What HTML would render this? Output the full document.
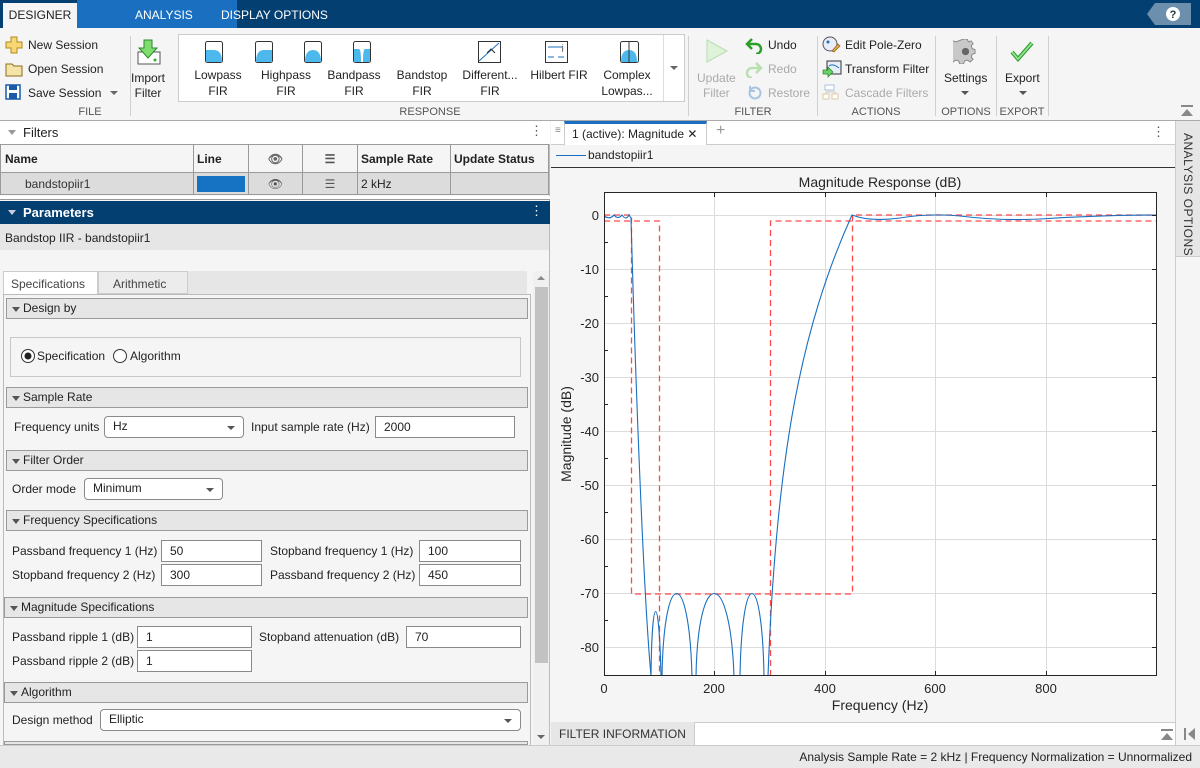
<!DOCTYPE html>
<html><head><meta charset="utf-8"><style>
*{box-sizing:border-box;margin:0;padding:0}
body{width:1200px;height:768px;position:relative;overflow:hidden;font-family:"Liberation Sans",Arial,sans-serif;font-size:12px;color:#222;background:#f5f5f5}
.a{position:absolute}
.t{position:absolute;white-space:nowrap}
.sec{position:absolute;left:6px;width:522px;height:21px;background:#e6e6e6;border:1px solid #9a9a9a;padding-left:16px;line-height:19px;font-size:12px}
.sec:before{content:"";position:absolute;left:5px;top:8px;border-left:4px solid transparent;border-right:4px solid transparent;border-top:5px solid #555}
.inp{position:absolute;height:22px;background:#fff;border:1px solid #8a8a8a;padding-left:8px;line-height:20px}
.dd{position:absolute;height:22px;background:#fff;border:1px solid #8a8a8a;border-radius:4px;padding-left:8px;line-height:19px}
.dd:after{content:"";position:absolute;right:8px;top:9px;border-left:4px solid transparent;border-right:4px solid transparent;border-top:4px solid #555}
.lbl{position:absolute;white-space:nowrap;line-height:22px}
.rb{position:absolute;font-size:12px;white-space:nowrap}
.gl{position:absolute;top:67px;text-align:center;width:70px;line-height:16px;font-size:12px}
.grp{position:absolute;top:106px;font-size:11px;color:#555;text-align:center}
.vs{position:absolute;top:36px;height:80px;width:1px;background:#d0d0d0}
th,td{border:1px solid #9a9a9a}
</style></head><body>
<div class="a" style="left:0;top:0;width:1200px;height:28px;background:#043f72"></div>
<div class="a" style="left:77px;top:0;width:160px;height:28px;background:#1a6fc0"></div>
<div class="a" style="left:3px;top:3px;width:74px;height:25px;background:#f5f5f5"></div>
<div class="t" style="left:3px;width:74px;top:8px;text-align:center;font-size:12px;color:#222">DESIGNER</div>
<div class="t" style="left:135px;top:8px;font-size:12px;color:#fff">ANALYSIS</div>
<div class="t" style="left:221px;top:8px;font-size:12px;color:#fff">DISPLAY OPTIONS</div>
<svg class="a" style="left:1147px;top:3px" width="44" height="22"><path d="M8 0H44V22H8L0 11Z" fill="#6d8fae"/><circle cx="26" cy="11" r="7" fill="#fff"/><text x="26" y="15" font-size="11" font-weight="bold" text-anchor="middle" fill="#234" font-family="Liberation Sans">?</text></svg>
<div class="a" style="left:0;top:28px;width:1200px;height:93px;background:#f5f5f5;border-bottom:1px solid #aaa"></div>
<svg class="a" style="left:5px;top:36px" width="18" height="18"><path d="M6 1h6v5h5v6h-5v5H6v-5H1V6h5z" fill="#f7d774" stroke="#b08a1c"/></svg>
<div class="t" style="left:28px;top:38px">New Session</div>
<svg class="a" style="left:5px;top:61px" width="18" height="16"><path d="M1 3h6l2 2h8v10H1z" fill="#f5e4a8" stroke="#8a6d1c"/></svg>
<div class="t" style="left:28px;top:62px">Open Session</div>
<svg class="a" style="left:5px;top:84px" width="16" height="16"><rect x="1" y="1" width="14" height="14" fill="#fff" stroke="#1a5aa8" stroke-width="1.5"/><rect x="4" y="1" width="8" height="5" fill="#1a5aa8"/><rect x="4" y="9" width="8" height="6" fill="#1a5aa8"/></svg>
<div class="t" style="left:28px;top:86px">Save Session</div>
<div class="a" style="left:110px;top:91px;border-left:4px solid transparent;border-right:4px solid transparent;border-top:4px solid #666"></div>
<svg class="a" style="left:135px;top:38px" width="28" height="28"><rect x="3" y="14" width="22" height="12" fill="#fff" stroke="#555"/><circle cx="20" cy="22" r="1.5" fill="#3a3"/><path d="M9 2h8v8h5l-9 10-9-10h5z" fill="#7fdc6e" stroke="#2a8a2a"/></svg>
<div class="t" style="left:131px;top:71px;text-align:center;line-height:15px">Import<br>Filter</div>
<div class="grp" style="left:70px;width:40px">FILE</div>
<div class="vs" style="left:130px"></div>
<div class="a" style="left:178px;top:34px;width:507px;height:68px;background:#fff;border:1px solid #ccc"></div>
<div class="a" style="left:663px;top:35px;width:21px;height:66px;border-left:1px solid #ddd"></div>
<div class="a" style="left:670px;top:66px;border-left:4px solid transparent;border-right:4px solid transparent;border-top:4px solid #666"></div>
<svg class="a" style="left:205px;top:41px" width="220" height="22">
<g stroke="#333" stroke-width="1" fill="#fff"><rect x="0.5" y="0.5" width="17" height="21" rx="2"/><rect x="50.5" y="0.5" width="17" height="21" rx="2"/><rect x="99.5" y="0.5" width="17" height="21" rx="2"/><rect x="148.5" y="0.5" width="17" height="21" rx="2"/></g>
<path d="M1 9h8q8 0 8 12H1z" fill="#4db8ec"/><path d="M51 21q0-12 8-12h8v12z" fill="#4db8ec"/><path d="M100 21q0-12 8-12q8 0 8 12z" fill="#4db8ec"/><path d="M149 8h5q2 0 2 13h2q0-13 2-13h5v13h-16z" fill="#4db8ec"/>
</svg>
<svg class="a" style="left:478px;top:41px" width="180" height="22"><rect x="0.5" y="0.5" width="22" height="21" fill="#fff" stroke="#333"/><path d="M1 20L21 2" stroke="#1a6fc0"/><path d="M9 12l4-4 4 4" stroke="#333" fill="none"/><rect x="67.5" y="0.5" width="22" height="21" fill="#fff" stroke="#333"/><path d="M70 6h14M70 16h6M80 16h6" stroke="#1a6fc0"/><text x="84" y="9" font-size="7">j</text><rect x="142.5" y="0.5" width="18" height="21" rx="2" fill="#fff" stroke="#333"/><path d="M143 21q0-12 8-12q8 0 8 12z" fill="#4db8ec"/><path d="M151 1v20" stroke="#333"/></svg>
<div class="gl" style="left:183px">Lowpass<br>FIR</div>
<div class="gl" style="left:251px">Highpass<br>FIR</div>
<div class="gl" style="left:319px">Bandpass<br>FIR</div>
<div class="gl" style="left:387px">Bandstop<br>FIR</div>
<div class="gl" style="left:455px">Different...<br>FIR</div>
<div class="gl" style="left:524px">Hilbert FIR</div>
<div class="gl" style="left:592px">Complex<br>Lowpas...</div>
<div class="grp" style="left:390px;width:80px">RESPONSE</div>
<div class="vs" style="left:688px"></div>
<svg class="a" style="left:705px;top:38px" width="24" height="26"><path d="M2 2L22 13L2 24Z" fill="#dff3da" stroke="#b6dfae"/></svg>
<div class="t" style="left:697px;top:71px;text-align:center;line-height:15px;color:#aaa">Update<br>Filter</div>
<svg class="a" style="left:745px;top:36px" width="18" height="18"><path d="M7 3L2 8l5 5M2 8h9a5 5 0 0 1 0 10" fill="none" stroke="#2aa02a" stroke-width="2.5"/></svg>
<div class="t" style="left:768px;top:38px">Undo</div>
<svg class="a" style="left:745px;top:60px" width="18" height="18"><path d="M11 3l5 5-5 5M16 8H7a5 5 0 0 0 0 10" fill="none" stroke="#b8e0b0" stroke-width="2.5"/></svg>
<div class="t" style="left:768px;top:62px;color:#aaa">Redo</div>
<svg class="a" style="left:747px;top:84px" width="16" height="16"><circle cx="8" cy="9" r="5.5" fill="none" stroke="#a8c4e4" stroke-width="2"/><path d="M3 2v5h5" fill="none" stroke="#a8c4e4" stroke-width="2"/></svg>
<div class="t" style="left:768px;top:86px;color:#aaa">Restore</div>
<div class="grp" style="left:730px;width:46px">FILTER</div>
<div class="vs" style="left:817px"></div>
<svg class="a" style="left:822px;top:36px" width="20" height="18"><circle cx="8" cy="8" r="7" fill="#e8eef8" stroke="#555"/><circle cx="6" cy="6" r="1.5" fill="#1a6fc0"/><path d="M10 15l6-7 2 2-6 6z" fill="#e8a84a" stroke="#8a5a1a" stroke-width=".7"/></svg>
<div class="t" style="left:845px;top:38px">Edit Pole-Zero</div>
<svg class="a" style="left:822px;top:60px" width="20" height="18"><rect x="5" y="1" width="14" height="13" fill="#e8eef8" stroke="#333"/><path d="M7 6q4-3 10 2" stroke="#1a6fc0" fill="none"/><path d="M1 10h5v-3l5 5-5 5v-3H1z" fill="#6ad06a" stroke="#2a8a2a" stroke-width=".7"/></svg>
<div class="t" style="left:845px;top:62px">Transform Filter</div>
<svg class="a" style="left:822px;top:84px" width="18" height="16"><rect x="3" y="1" width="9" height="5" fill="#fff" stroke="#a9c0e0"/><rect x="1" y="10" width="6" height="5" fill="#fff" stroke="#e0c8a0"/><rect x="10" y="10" width="6" height="5" fill="#fff" stroke="#e0c8a0"/><path d="M7 6v2M4 8h9v2M4 8v2" stroke="#ccc" fill="none"/></svg>
<div class="t" style="left:845px;top:86px;color:#aaa">Cascade Filters</div>
<div class="grp" style="left:850px;width:52px">ACTIONS</div>
<div class="vs" style="left:935px"></div>
<svg class="a" style="left:953px;top:39px" width="25" height="25" viewBox="0 0 24 24"><path d="M10 1h4l1 3 3-1 2 3-2 2 1 3 3 1v4l-3 1-1 3 2 2-3 3-3-2-3 1-1 3h-4l-1-3-3-1-3 2-3-3 2-2-1-3-3-1v-4l3-1 1-3-2-2 3-3 3 1z" fill="#c8c8c8" stroke="#888" transform="scale(.92) translate(1 -1)"/><circle cx="12" cy="12" r="3.5" fill="#666"/></svg>
<div class="t" style="left:944px;top:71px">Settings</div>
<div class="a" style="left:961px;top:91px;border-left:4px solid transparent;border-right:4px solid transparent;border-top:4px solid #555"></div>
<div class="grp" style="left:940px;width:52px">OPTIONS</div>
<div class="vs" style="left:996px"></div>
<svg class="a" style="left:1010px;top:40px" width="24" height="22"><path d="M2 12l6 7L22 3" fill="none" stroke="#2a9a2a" stroke-width="4"/><path d="M2 12l6 7L22 3" fill="none" stroke="#8ee08a" stroke-width="2"/></svg>
<div class="t" style="left:1005px;top:71px">Export</div>
<div class="a" style="left:1019px;top:91px;border-left:4px solid transparent;border-right:4px solid transparent;border-top:4px solid #555"></div>
<div class="grp" style="left:998px;width:48px">EXPORT</div>
<div class="vs" style="left:1048px"></div>
<svg class="a" style="left:1180px;top:105px" width="14" height="12"><path d="M1 1h12" stroke="#888" stroke-width="2"/><path d="M1 11L7 4l6 7z" fill="#888"/></svg>

<div class="a" style="left:0;top:121px;width:550px;height:624px;background:#f5f5f5;border-right:1px solid #bbb"></div>
<div class="a" style="left:0;top:121px;width:550px;height:23px;background:#fff"></div>
<div class="a" style="left:8px;top:130px;border-left:4px solid transparent;border-right:4px solid transparent;border-top:5px solid #999"></div>
<div class="t" style="left:23px;top:125px;font-size:13px">Filters</div>
<div class="t" style="left:530px;top:123px;font-size:13px;color:#555">⋮</div>
<table class="a" style="left:0;top:144px;width:549px;border-collapse:collapse;font-size:12px">
<tr style="height:28px;background:#f5f5f5;font-weight:bold"><td style="width:193px;padding-left:4px">Name</td><td style="width:55px;padding-left:3px">Line</td><td style="width:54px;text-align:center;color:#666">👁︎</td><td style="width:55px;text-align:center;color:#555">☰</td><td style="width:93px;padding-left:3px">Sample Rate</td><td style="padding-left:3px">Update Status</td></tr>
<tr style="height:22px;background:#dcdcdc"><td style="padding-left:24px;color:#333">bandstopiir1</td><td style="padding:1px 3px"><div style="height:16px;background:#1672c2"></div></td><td style="text-align:center;color:#555">👁︎</td><td style="text-align:center;color:#555">☰</td><td style="padding-left:3px">2 kHz</td><td></td></tr>
</table>
<div class="a" style="left:0;top:196px;width:550px;height:4px;background:#fff;border-bottom:1px solid #999"></div>
<div class="a" style="left:0;top:201px;width:550px;height:23px;background:#043f72"></div>
<div class="a" style="left:8px;top:210px;border-left:4px solid transparent;border-right:4px solid transparent;border-top:5px solid #ccd"></div>
<div class="t" style="left:23px;top:205px;font-size:13px;color:#fff;font-weight:bold">Parameters</div>
<div class="t" style="left:530px;top:203px;font-size:13px;color:#fff">⋮</div>
<div class="a" style="left:0;top:224px;width:549px;height:26px;background:#e6e6e6"></div>
<div class="t" style="left:5px;top:231px">Bandstop IIR - bandstopiir1</div>
<div class="a" style="left:3px;top:271px;width:524px;height:23px;background:#e6e6e6"></div>
<div class="a" style="left:3px;top:271px;width:95px;height:24px;background:#fff;border:1px solid #ccc;border-bottom:none"></div>
<div class="t" style="left:11px;top:277px;color:#444">Specifications</div>
<div class="a" style="left:98px;top:271px;width:90px;height:23px;border:1px solid #ccc;background:#ececec"></div>
<div class="t" style="left:113px;top:277px;color:#444">Arithmetic</div>
<div class="a" style="left:3px;top:294px;width:528px;height:451px;border:1px solid #bbb;border-bottom:none"></div>
<div class="a" style="left:533px;top:271px;width:16px;height:474px;background:#f0f0f0"></div>
<div class="a" style="left:535px;top:287px;width:13px;height:376px;background:#c2c2c2"></div>
<div class="a" style="left:537px;top:276px;border-left:4px solid transparent;border-right:4px solid transparent;border-bottom:4px solid #888"></div>
<div class="a" style="left:537px;top:735px;border-left:4px solid transparent;border-right:4px solid transparent;border-top:4px solid #666"></div>

<div class="sec" style="top:298px">Design by</div>
<div class="a" style="left:10px;top:337px;width:511px;height:40px;border:1px solid #c8c8c8"></div>
<svg class="a" style="left:20px;top:348px" width="16" height="16"><circle cx="8" cy="8" r="6.5" fill="#fff" stroke="#333"/><circle cx="8" cy="8" r="3.5" fill="#222"/></svg>
<div class="t" style="left:37px;top:349px">Specification</div>
<svg class="a" style="left:112px;top:348px" width="16" height="16"><circle cx="8" cy="8" r="6.5" fill="#fff" stroke="#333"/></svg>
<div class="t" style="left:130px;top:349px">Algorithm</div>

<div class="sec" style="top:387px">Sample Rate</div>
<div class="lbl" style="left:14px;top:416px">Frequency units</div>
<div class="dd" style="left:104px;top:416px;width:140px">Hz</div>
<div class="lbl" style="left:251px;top:416px">Input sample rate (Hz)</div>
<div class="inp" style="left:375px;top:416px;width:140px">2000</div>

<div class="sec" style="top:450px">Filter Order</div>
<div class="lbl" style="left:12px;top:478px">Order mode</div>
<div class="dd" style="left:84px;top:478px;width:139px">Minimum</div>

<div class="sec" style="top:510px">Frequency Specifications</div>
<div class="lbl" style="left:12px;top:540px">Passband frequency 1 (Hz)</div>
<div class="inp" style="left:161px;top:540px;width:101px">50</div>
<div class="lbl" style="left:270px;top:540px">Stopband frequency 1 (Hz)</div>
<div class="inp" style="left:419px;top:540px;width:102px">100</div>
<div class="lbl" style="left:12px;top:564px">Stopband frequency 2 (Hz)</div>
<div class="inp" style="left:161px;top:564px;width:101px">300</div>
<div class="lbl" style="left:270px;top:564px">Passband frequency 2 (Hz)</div>
<div class="inp" style="left:419px;top:564px;width:102px">450</div>

<div class="sec" style="top:597px;left:4px;width:524px">Magnitude Specifications</div>
<div class="lbl" style="left:12px;top:626px">Passband ripple 1 (dB)</div>
<div class="inp" style="left:137px;top:626px;width:115px">1</div>
<div class="lbl" style="left:259px;top:626px">Stopband attenuation (dB)</div>
<div class="inp" style="left:406px;top:626px;width:115px">70</div>
<div class="lbl" style="left:12px;top:650px">Passband ripple 2 (dB)</div>
<div class="inp" style="left:137px;top:650px;width:115px">1</div>

<div class="sec" style="top:682px;left:4px;width:524px">Algorithm</div>
<div class="lbl" style="left:12px;top:709px">Design method</div>
<div class="dd" style="left:100px;top:709px;width:421px">Elliptic</div>
<div class="a" style="left:4px;top:741px;width:524px;height:4px;border:1px solid #9a9a9a;background:#e6e6e6"></div>

<div class="a" style="left:551px;top:121px;width:624px;height:24px;background:#fff;border-bottom:1px solid #ccc"></div>
<div class="t" style="left:555px;top:125px;color:#888;font-size:10px">≡</div>
<div class="a" style="left:564px;top:121px;width:143px;height:24px;background:#fff;border-top:3px solid #1a6fc0;border-right:1px solid #ccc;border-left:1px solid #ccc"></div>
<div class="t" style="left:572px;top:127px">1 (active): Magnitude ✕</div>
<div class="t" style="left:716px;top:122px;font-size:16px;color:#999">+</div>
<div class="t" style="left:1152px;top:124px;font-size:13px;color:#555">⋮</div>
<div class="a" style="left:551px;top:145px;width:624px;height:23px;background:#f5f5f5;border-bottom:1px solid #333"></div>
<div class="a" style="left:556px;top:155px;width:30px;height:1px;background:#1a6fc0"></div>
<div class="t" style="left:588px;top:148px">bandstopiir1</div>
<div class="a" style="left:551px;top:168px;width:624px;height:554px;background:#f5f5f5"></div>
<svg class="a" style="left:551px;top:168px" width="624" height="554" font-family="Liberation Sans" font-size="13" fill="#262626">
<g transform="translate(-551 -168)">
<rect x="604" y="192" width="553" height="484" fill="#fff"/>
<g stroke="#dcdcdc" stroke-width="1">
<path d="M714.5 192V676M825.5 192V676M935.5 192V676M1046.5 192V676"/>
<path d="M604 215.5H1157M604 269.5H1157M604 323.5H1157M604 377.5H1157M604 431.5H1157M604 485.5H1157M604 539.5H1157M604 593.5H1157M604 647.5H1157"/>
</g>
<g stroke="#ff4a4a" stroke-width="1.3" stroke-dasharray="6 4" fill="none">
<path d="M604 215H631.5V594H852.5V215H1157"/>
<path d="M604 221H659.5V676M770.5 676V221H1157"/>
</g>
<g stroke="#1a6fc0" stroke-width="1.1" fill="none">
<path d="M604 216Q610 220 614 215Q618 220 622 215Q626 221 629 215L631 218C636 400 644 600 651 676"/>
<path d="M651 676C652 590 659 590 661 676"/>
<path d="M662 676C664 566 689 566 692 676"/>
<path d="M696 676C698 566 730 566 734 676"/>
<path d="M740 676C742 566 762 566 764 676"/>
<path d="M768 676C776 460 800 330 852 215Q870 222 900 218Q930 213 960 216Q1000 221 1040 219Q1100 215 1157 215"/>
</g>
<rect x="604.5" y="192.5" width="552" height="483" fill="none" stroke="#262626"/>
<g stroke="#262626"><path d="M714.5 676v-5M825.5 676v-5M935.5 676v-5M1046.5 676v-5M714.5 192v5M825.5 192v5M935.5 192v5M1046.5 192v5M604 242.5h4M604 296.5h4M604 350.5h4M604 404.5h4M604 458.5h4M604 512.5h4M604 566.5h4M604 620.5h4M1157 215.5h-5M1157 269.5h-5M1157 323.5h-5M1157 377.5h-5M1157 431.5h-5M1157 485.5h-5M1157 539.5h-5M1157 593.5h-5M1157 647.5h-5"/></g>
<g text-anchor="end"><text x="599" y="220">0</text><text x="599" y="274">-10</text><text x="599" y="328">-20</text><text x="599" y="382">-30</text><text x="599" y="436">-40</text><text x="599" y="490">-50</text><text x="599" y="544">-60</text><text x="599" y="598">-70</text><text x="599" y="652">-80</text></g>
<g text-anchor="middle"><text x="604" y="693">0</text><text x="714" y="693">200</text><text x="825" y="693">400</text><text x="935" y="693">600</text><text x="1046" y="693">800</text></g>
<text x="880" y="710" text-anchor="middle" font-size="14">Frequency (Hz)</text>
<text x="880" y="187" text-anchor="middle" font-size="14">Magnitude Response (dB)</text>
<text transform="translate(571 434) rotate(-90)" text-anchor="middle" font-size="14">Magnitude (dB)</text>
</g></svg>
<div class="a" style="left:551px;top:722px;width:624px;height:23px;background:#fff;border-top:1px solid #ccc"></div>
<div class="a" style="left:551px;top:722px;width:144px;height:23px;background:#e6e6e6;border-right:1px solid #ccc"></div>
<div class="t" style="left:559px;top:727px;color:#333">FILTER INFORMATION</div>
<svg class="a" style="left:1160px;top:729px" width="14" height="12"><path d="M1 1h12" stroke="#888" stroke-width="2"/><path d="M1 11L7 4l6 7z" fill="#888"/></svg>
<div class="a" style="left:1175px;top:121px;width:25px;height:624px;background:#f5f5f5;border-left:1px solid #ccc"></div>
<div class="a" style="left:1176px;top:121px;width:24px;height:136px;background:#e6e6e6;border-bottom:1px solid #ccc"></div>
<div class="t" style="left:1181px;top:133px;writing-mode:vertical-rl;font-size:12px;color:#333;letter-spacing:.5px">ANALYSIS OPTIONS</div>
<svg class="a" style="left:1184px;top:727px" width="12" height="14"><path d="M1 1v12" stroke="#888" stroke-width="2"/><path d="M11 1L4 7l7 6z" fill="#888"/></svg>
<div class="a" style="left:0;top:745px;width:1200px;height:23px;background:#e9e9e9;border-top:1px solid #ccc"></div>
<div class="t" style="right:8px;top:750px;color:#222">Analysis Sample Rate = 2 kHz | Frequency Normalization = Unnormalized</div>
</body></html>
